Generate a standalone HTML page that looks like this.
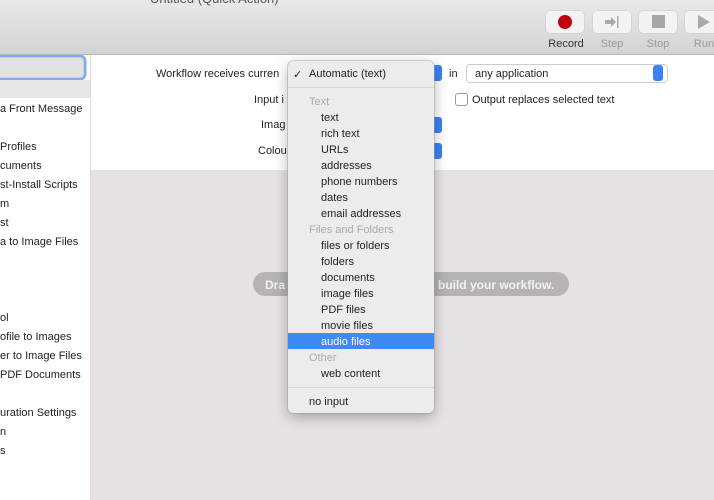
<!DOCTYPE html><html><head><style>
body{margin:0;width:714px;height:500px;overflow:hidden;font-family:"Liberation Sans",sans-serif;font-size:11px;color:#222;position:relative;background:#fff}
.a{position:absolute}
.tb{left:0;top:0;width:714px;height:54px;background:linear-gradient(#e9e9e9,#d3d3d3);border-bottom:1px solid #b8b8b8}
.btn{top:11px;width:38px;height:22px;background:#f3f3f3;border-radius:4px;box-shadow:0 0 0 .5px #c8c8c8}
.bl{top:38px;font-size:11px;color:#999;width:50px;text-align:center}
.side{left:0;top:55px;width:90px;height:445px;background:#fff;border-right:1px solid #ddd;overflow:hidden}
.si{left:0;white-space:nowrap;font-size:11px;color:#222}
.wf{left:91px;top:170px;width:623px;height:330px;background:#e7e3e4}
.lab{font-size:11px;color:#222;white-space:nowrap}
.menu{left:288px;top:61px;width:146px;height:352px;background:#ececec;border-radius:5px;box-shadow:0 4px 14px rgba(0,0,0,.3),0 0 0 .5px #bbb}
.mi{left:33px;font-size:11px;color:#222;white-space:nowrap}
.mh{left:21px;font-size:11px;color:#aaa}
.step{width:10px;height:16px;background:#3b82f6;border-radius:3px}
</style></head><body>
<div class="a tb"></div>
<div class="a" style="left:150px;top:-9px;color:#555;font-size:13px">Untitled (Quick Action)</div>
<div class="a btn" style="left:546px"><div class="a" style="left:12px;top:4px;width:14px;height:14px;border-radius:50%;background:#c00012"></div></div>
<div class="a btn" style="left:593px"><svg class="a" style="left:11px;top:4px" width="16" height="14"><path d="M1 5h6V2l5 5-5 5V9H1z" fill="#aaa"/><rect x="13" y="1" width="1.5" height="12" fill="#aaa"/></svg></div>
<div class="a btn" style="left:639px"><div class="a" style="left:13px;top:4px;width:13px;height:13px;background:#a8a8a8"></div></div>
<div class="a btn" style="left:685px"><svg class="a" style="left:12px;top:3px" width="14" height="16"><path d="M1 1l12 7-12 7z" fill="#aaa"/></svg></div>
<div class="a bl" style="left:541px;color:#333">Record</div>
<div class="a bl" style="left:587px">Step</div>
<div class="a bl" style="left:633px">Stop</div>
<div class="a bl" style="left:679px">Run</div>
<div class="a side">
<div class="a" style="left:-10px;top:2px;width:92px;height:19px;border:1px solid #cfcfcf;border-radius:4px;background:#e2e2e2;box-shadow:0 0 0 2.5px #7eaef2"></div>
<div class="a" style="left:0;top:25px;width:90px;height:18px;background:#e7e7e7"></div>
<div class="a si" style="top:48px">a Front Message</div>
<div class="a si" style="top:86px">Profiles</div>
<div class="a si" style="top:105px">cuments</div>
<div class="a si" style="top:124px">st-Install Scripts</div>
<div class="a si" style="top:143px">m</div>
<div class="a si" style="top:162px">st</div>
<div class="a si" style="top:181px">a to Image Files</div>
<div class="a si" style="top:257px">ol</div>
<div class="a si" style="top:276px">ofile to Images</div>
<div class="a si" style="top:295px">er to Image Files</div>
<div class="a si" style="top:314px">PDF Documents</div>
<div class="a si" style="top:352px">uration Settings</div>
<div class="a si" style="top:371px">n</div>
<div class="a si" style="top:390px">s</div>
</div>
<div class="a" style="left:91px;top:55px;width:623px;height:115px;background:#fff;border-bottom:1px solid #ddd"></div>
<div class="a wf"></div>
<div class="a" style="left:253px;top:272px;width:316px;height:24px;border-radius:12px;background:#b5b3b4"></div>
<div class="a" style="left:265px;top:278px;color:#f2f2f2;font-size:12px;font-weight:bold">Dra</div>
<div class="a" style="left:438px;top:278px;color:#f2f2f2;font-size:12px;font-weight:bold">build your workflow.</div>
<div class="a lab" style="left:156px;top:68px">Workflow receives curren</div>
<div class="a lab" style="left:254px;top:94px">Input i</div>
<div class="a lab" style="left:261px;top:119px">Imag</div>
<div class="a lab" style="left:258px;top:145px">Colou</div>
<div class="a step" style="left:432px;top:65px"></div>
<div class="a step" style="left:432px;top:117px"></div>
<div class="a step" style="left:432px;top:143px"></div>
<div class="a lab" style="left:449px;top:68px">in</div>
<div class="a" style="left:466px;top:64px;width:200px;height:17px;border:1px solid #ccc;border-radius:4px;background:#fff"></div>
<div class="a lab" style="left:475px;top:68px">any application</div>
<div class="a step" style="left:653px;top:65px"></div>
<div class="a" style="left:455px;top:93px;width:11px;height:11px;border:1px solid #999;border-radius:3px;background:#fff"></div>
<div class="a lab" style="left:472px;top:94px">Output replaces selected text</div>
<div class="a menu">
<div class="a" style="left:5px;top:7px;font-size:11px">✓</div>
<div class="a mh" style="top:7px;color:#222">Automatic (text)</div>
<div class="a" style="left:0;top:26px;width:146px;height:1px;background:#d4d4d4"></div>
<div class="a mh" style="top:35px">Text</div>
<div class="a mi" style="top:51px">text</div>
<div class="a mi" style="top:67px">rich text</div>
<div class="a mi" style="top:83px">URLs</div>
<div class="a mi" style="top:99px">addresses</div>
<div class="a mi" style="top:115px">phone numbers</div>
<div class="a mi" style="top:131px">dates</div>
<div class="a mi" style="top:147px">email addresses</div>
<div class="a mh" style="top:163px">Files and Folders</div>
<div class="a mi" style="top:179px">files or folders</div>
<div class="a mi" style="top:195px">folders</div>
<div class="a mi" style="top:211px">documents</div>
<div class="a mi" style="top:227px">image files</div>
<div class="a mi" style="top:243px">PDF files</div>
<div class="a mi" style="top:259px">movie files</div>
<div class="a" style="left:0;top:272px;width:146px;height:16px;background:#3d8af5"></div>
<div class="a mi" style="top:275px;color:#fff">audio files</div>
<div class="a mh" style="top:291px">Other</div>
<div class="a mi" style="top:307px">web content</div>
<div class="a" style="left:0;top:326px;width:146px;height:1px;background:#d4d4d4"></div>
<div class="a mh" style="top:335px;color:#222">no input</div>
</div>
</body></html>
